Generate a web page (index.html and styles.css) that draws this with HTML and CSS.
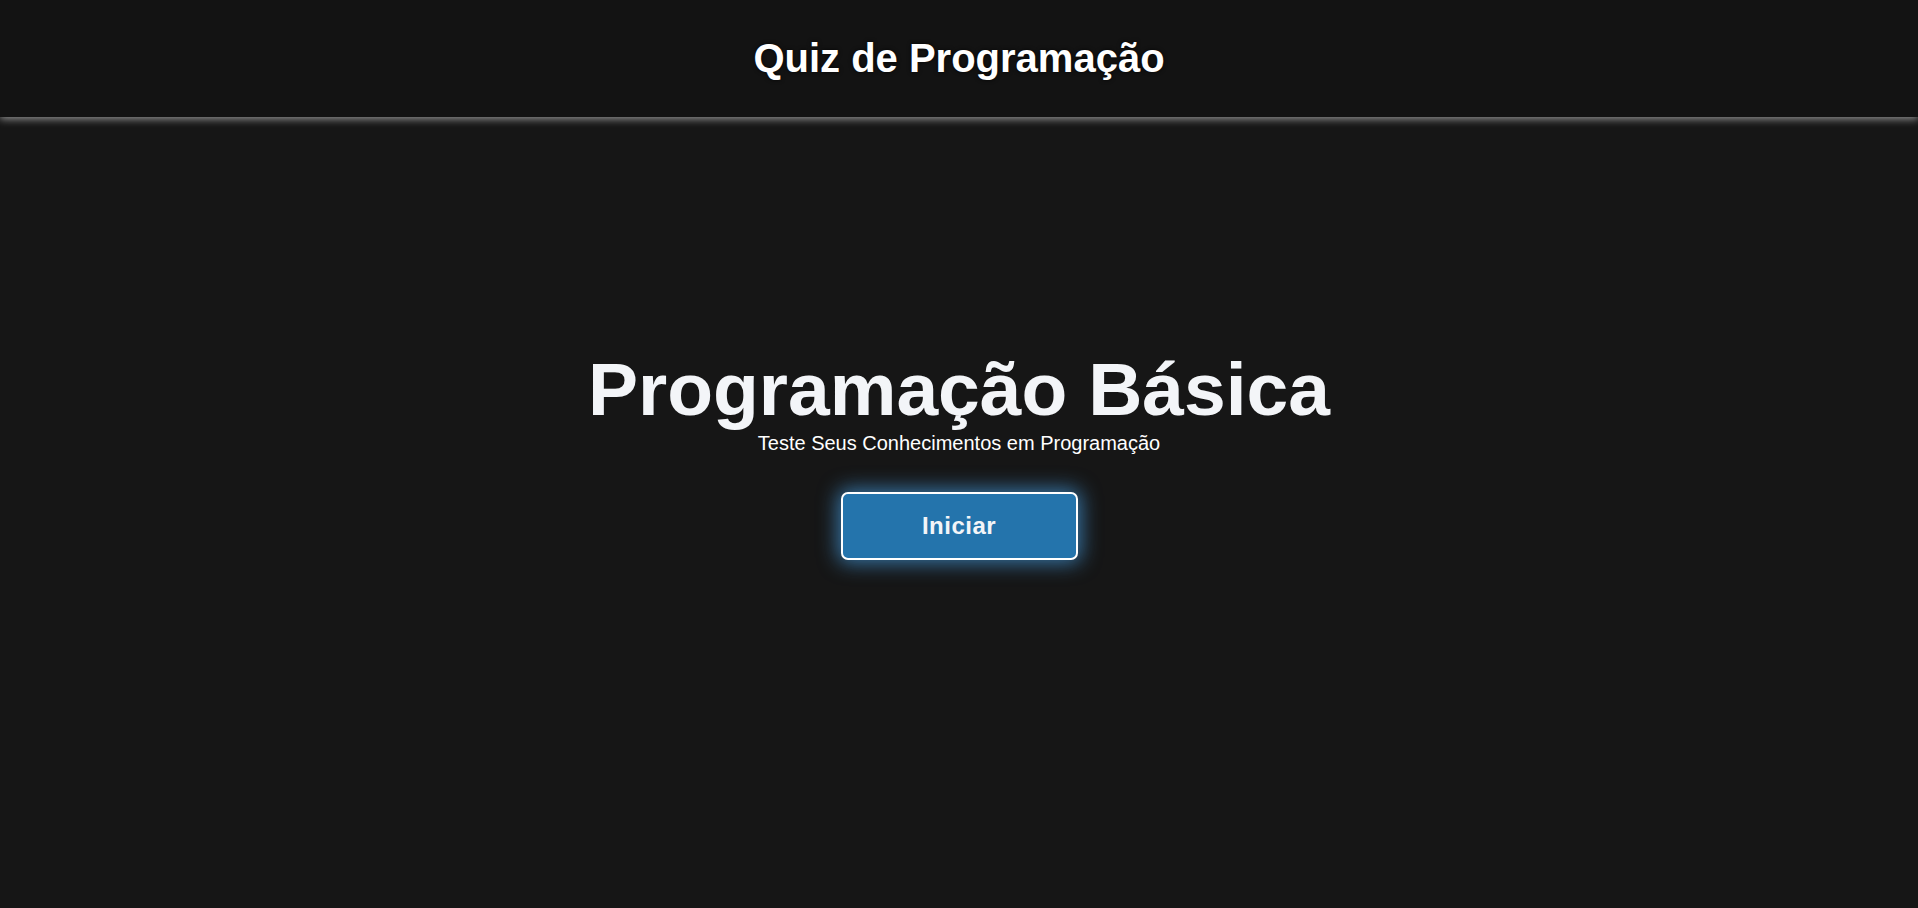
FILE: index.html
```html
<!DOCTYPE html>
<html lang="pt-BR">
<head>
<meta charset="utf-8">
<title>Quiz de Programação</title>
<link rel="stylesheet" href="styles.css">
</head>
<body>
<header class="topbar">
  <h1 class="topbar-title">Quiz de Programação</h1>
</header>
<main class="hero">
  <h2 class="hero-title">Programação Básica</h2>
  <p class="hero-subtitle">Teste Seus Conhecimentos em Programação</p>
  <button class="start-btn" type="button">Iniciar</button>
</main>
</body>
</html>
```
FILE: styles.css
```css
* { box-sizing: border-box; }
html, body {
  margin: 0;
  padding: 0;
  height: 100%;
}
body {
  background: #161616;
  color: #ffffff;
  font-family: "Liberation Sans", Arial, sans-serif;
  overflow: hidden;
}
.topbar {
  position: relative;
  z-index: 1;
  height: 117px;
  background: #131313;
  display: flex;
  align-items: center;
  justify-content: center;
  box-shadow: 0 2px 8px rgba(255, 255, 255, 0.55);
}
.topbar-title {
  margin: 0;
  font-size: 40px;
  font-weight: 700;
  color: #ffffff;
  text-shadow: 0 0 4px rgba(0, 0, 0, 0.8);
}
.hero {
  display: flex;
  flex-direction: column;
  align-items: center;
  padding-top: 229px;
}
.hero-title {
  margin: 0;
  font-size: 75px;
  font-weight: 700;
  color: #f3f5f8;
  line-height: normal;
}
.hero-subtitle {
  margin: 0;
  font-size: 20px;
  color: #ffffff;
  line-height: 23px;
}
.start-btn {
  margin-top: 37px;
  width: 237px;
  height: 68px;
  background: #2474ac;
  color: #f3f5f8;
  border: 2px solid #ffffff;
  border-radius: 7px;
  font-family: "Liberation Sans", Arial, sans-serif;
  font-size: 24px;
  font-weight: 700;
  letter-spacing: 0.5px;
  box-shadow: 0 0 20px 3px rgba(70, 160, 230, 0.7);
  cursor: pointer;
}
```
